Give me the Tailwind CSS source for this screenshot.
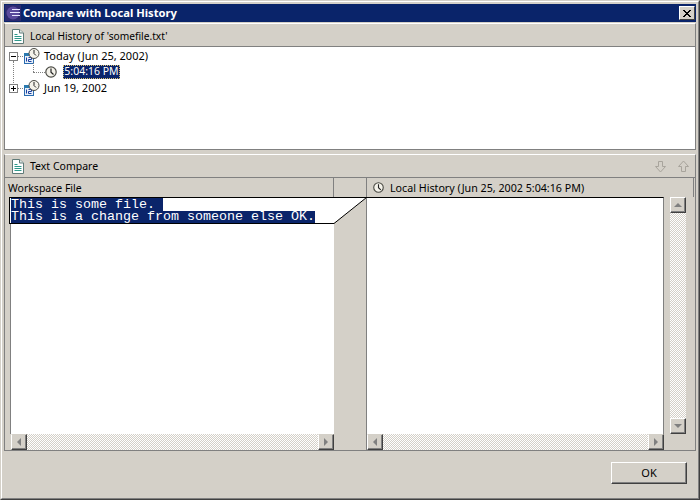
<!DOCTYPE html>
<html lang="en">
<head>
  <meta charset="UTF-8">
  <title>Compare with Local History</title>
  <script src="https://cdn.jsdelivr.net/npm/@tailwindcss/browser@4"></script>
</head>
<body class="w-[700px] h-[500px] overflow-hidden bg-[#d4d0c8] font-['Noto_Sans',sans-serif] text-[10.5px] text-black">
  <svg width="0" height="0" class="absolute">
    <defs>
      <pattern id="dots" width="2" height="2" patternUnits="userSpaceOnUse">
        <rect width="2" height="2" fill="#ffffff"/>
        <rect width="1" height="1" fill="#d4d0c8"/>
        <rect x="1" y="1" width="1" height="1" fill="#d4d0c8"/>
      </pattern>
      <symbol id="file" viewBox="0 0 12 15">
        <path d="M.5.5h7l4 3.500v10.500h-11z" fill="#fff" stroke="#5f7a78"/>
        <path d="M7.500.5v3.500h4" fill="#dfe8e6" stroke="#5f7a78"/>
        <path d="M2.500 5.500h3M2.500 7.500h7M2.500 9.500h7M2.500 11.500h7" stroke="#2f9a8c"/>
      </symbol>
      <symbol id="clock" viewBox="0 0 12 12">
        <circle cx="6" cy="6" r="5.200" fill="#f4f2ea" stroke="#4a4a44" stroke-width="1.200"/>
        <path d="M6 2.500v3.700l2.500 2.300" fill="none" stroke="#222" stroke-width="1.200"/>
      </symbol>
      <symbol id="cal" viewBox="0 0 20 18">
        <rect x="1.500" y="6.500" width="9" height="10" fill="#e8f0f8" stroke="#2a6cb0"/>
        <rect x="1" y="6" width="10" height="3" fill="#2a7ab0"/>
        <path d="M3.500 10.500v4M5.500 10.500h3v2h-3v2h3" fill="none" stroke="#1a3fa0"/>
        <circle cx="11" cy="6.500" r="5" fill="#f4f2ea" stroke="#4a4a44"/>
        <path d="M11 3v3.500l2 2" fill="none" stroke="#222"/>
      </symbol>
    </defs>
  </svg>

  <div class="h-full border border-l-[#d4d0c8] border-t-[#d4d0c8] border-r-[#404040] border-b-[#404040]">
  <div class="h-full flex flex-col border border-l-white border-t-white border-r-[#808080] border-b-[#808080] px-[2px] pt-[2px]">
    <!-- title bar -->
    <div class="h-[18px] shrink-0 flex items-center bg-[#0a246a] pl-[1px] pr-[1px]">
      <svg width="16" height="16" viewBox="0 0 16 16" class="shrink-0">
        <rect width="16" height="16" fill="#2c2a70"/>
        <circle cx="8" cy="8" r="6.500" fill="#5a4a9c"/>
        <path d="M15 4.500H7M15 7.500H5M15 10.500H7" stroke="#e8e8ff" stroke-width="1.200"/>
      </svg>
      <span class="ml-[2px] font-bold text-white text-[11.2px]">Compare with Local History</span>
      <div class="ml-auto w-[16px] h-[14px] bg-[#d4d0c8] border border-t-white border-l-white border-r-[#404040] border-b-[#404040] flex items-center justify-center">
        <svg width="8" height="7" viewBox="0 0 8 7"><path d="M0 0l7 7M1 0l7 7M7 0l-7 7M8 0l-7 7" stroke="#000"/></svg>
      </div>
    </div>

    <!-- history pane -->
    <div class="mt-[1px] h-[127px] shrink-0 flex flex-col border border-t-white border-l-[#808080] border-r-[#808080] border-b-[#808080]">
      <div class="h-[23px] shrink-0 flex items-center pt-[2px] pl-[7px] border-b border-[#808080]">
        <svg width="12" height="15" class="shrink-0"><use href="#file"/></svg>
        <span class="ml-[6px] mt-[1px] text-[10.2px]">Local History of 'somefile.txt'</span>
      </div>
      <div class="flex-1 bg-white pt-[1px] pl-[4px] relative">
        <div class="h-[16px] flex items-center">
          <div class="mt-[1px] w-[9px] h-[9px] border border-[#808080] flex items-center justify-center shrink-0"><div class="w-[5px] h-[1px] bg-black"></div></div>
          <div class="w-[5px] border-t border-dotted border-[#808080]"></div>
          <svg width="20" height="18" class="shrink-0"><use href="#cal"/></svg>
          <span class="ml-[1px] text-[11px]">Today (Jun 25, 2002)</span>
        </div>
        <div class="h-[16px] flex items-center pl-[24px]">
          <div class="w-[12px] border-t border-dotted border-[#808080]"></div>
          <svg width="12" height="12" class="shrink-0"><use href="#clock"/></svg>
          <span class="ml-[6px] w-[57px] h-[14px] flex items-center justify-center bg-[#0a246a] text-white outline-1 outline-dotted outline-[#d8c070] -outline-offset-1">5:04:16 PM</span>
        </div>
        <div class="h-[16px] flex items-center">
          <div class="mt-[1px] w-[9px] h-[9px] border border-[#808080] flex items-center justify-center shrink-0 relative">
            <div class="w-[5px] h-[1px] bg-black"></div>
            <div class="absolute w-[1px] h-[5px] bg-black"></div>
          </div>
          <div class="w-[5px] border-t border-dotted border-[#808080]"></div>
          <svg width="20" height="18" class="shrink-0"><use href="#cal"/></svg>
          <span class="ml-[1px] text-[11px]">Jun 19, 2002</span>
        </div>
        <!-- tree guide lines -->
        <div class="absolute left-[8px] top-[14px] h-[22px] border-l border-dotted border-[#808080]"></div>
        <div class="absolute left-[28px] top-[16px] h-[9px] border-l border-dotted border-[#808080]"></div>
      </div>
    </div>

    <!-- compare pane -->
    <div class="mt-[4px] h-[297px] shrink-0 flex flex-col border border-t-white border-l-[#808080] border-r-[#808080] border-b-[#808080]">
      <div class="h-[23px] shrink-0 flex items-center pl-[7px] border-b border-[#808080]">
        <svg width="12" height="15" class="shrink-0"><use href="#file"/></svg>
        <span class="ml-[6px] mt-[2px]">Text Compare</span>
        <svg width="13" height="13" viewBox="0 0 13 13" class="ml-auto shrink-0"><path d="M4.500 1.500h4v5h3l-5 5.500-5-5.500h3z" fill="none" stroke="#a8a49c"/></svg>
        <svg width="13" height="13" viewBox="0 0 13 13" class="ml-[10px] mr-[5px] shrink-0"><path d="M4.500 11.500h4v-5h3l-5-5.500-5 5.500h3z" fill="none" stroke="#a8a49c"/></svg>
      </div>

      <div class="h-[19px] shrink-0 flex">
        <div class="w-[329px] flex items-center pt-[2px] pl-[3px] border-r border-[#808080]">Workspace File</div>
        <div class="w-[33px] border-r border-[#808080]"></div>
        <div class="flex-1 flex items-center pl-[6px] border-r border-[#808080] mr-[1px]">
          <svg width="11" height="11" class="shrink-0"><use href="#clock"/></svg>
          <span class="ml-[6px] mt-[2px] text-[10.7px]">Local History (Jun 25, 2002 5:04:16 PM)</span>
        </div>
      </div>

      <div class="flex-1 flex min-h-0">
        <!-- left side -->
        <div class="w-[329px] shrink-0 flex flex-col">
          <div class="flex-1 flex min-h-0">
            <div class="w-[6px] shrink-0 border-r border-[#808080]"></div>
            <div class="flex-1 bg-white">
              <div class="h-[27px] -ml-[2px] pl-[1px] bg-white border-l border-t border-b border-black font-['Liberation_Mono',monospace] text-[13.33px]">
                <div class="h-[13px] leading-[13px] w-fit bg-[#0a246a] text-white pr-[8px]">This is some file.</div>
                <div class="h-[12px] leading-[12px] w-fit bg-[#0a246a] text-white">This is a change from someone else OK.</div>
              </div>
            </div>
          </div>
          <div class="h-[16px] shrink-0 flex pl-[6px]">
            <div class="w-[16px] border border-t-[#d4d0c8] border-l-white border-r-[#404040] border-b-[#404040] shadow-[inset_-1px_-1px_0_#808080] flex items-center justify-center"><div class="border-y-[4px] border-y-transparent border-r-[4px] border-r-[#808080]"></div></div>
            <svg class="flex-1 h-full"><rect width="100%" height="100%" fill="url(#dots)"/></svg>
            <div class="w-[16px] border border-t-[#d4d0c8] border-l-white border-r-[#404040] border-b-[#404040] shadow-[inset_-1px_-1px_0_#808080] flex items-center justify-center"><div class="border-y-[4px] border-y-transparent border-l-[4px] border-l-[#808080]"></div></div>
          </div>
        </div>

        <!-- connector -->
        <div class="w-[33px] shrink-0 relative border-r border-[#808080]">
          <svg width="33" height="28" class="absolute left-0 top-0">
            <path d="M0 1H32V1L0 26z" fill="#fff"/>
            <path d="M0 .5H33M0 26.500L32.500 .5" stroke="#000" fill="none"/>
          </svg>
        </div>

        <!-- right side -->
        <div class="flex-1 flex flex-col min-w-0">
          <div class="flex-1 flex min-h-0">
            <div class="w-[297px] shrink-0 bg-white border-t border-black border-r border-r-[#808080]"></div>
            <div class="w-[16px] ml-[6px] shrink-0 flex flex-col">
              <div class="h-[16px] shrink-0 border border-t-white border-l-white border-r-[#404040] border-b-[#404040] shadow-[inset_-1px_-1px_0_#808080] flex items-center justify-center"><div class="border-x-[4px] border-x-transparent border-b-[4px] border-b-[#808080]"></div></div>
              <svg class="flex-1 w-full min-h-0"><rect width="100%" height="100%" fill="url(#dots)"/></svg>
              <div class="h-[16px] shrink-0 border border-t-white border-l-white border-r-[#404040] border-b-[#404040] shadow-[inset_-1px_-1px_0_#808080] flex items-center justify-center"><div class="border-x-[4px] border-x-transparent border-t-[4px] border-t-[#808080]"></div></div>
            </div>
          </div>
          <div class="h-[16px] shrink-0 flex w-[297px]">
            <div class="w-[16px] border border-t-[#d4d0c8] border-l-white border-r-[#404040] border-b-[#404040] shadow-[inset_-1px_-1px_0_#808080] flex items-center justify-center"><div class="border-y-[4px] border-y-transparent border-r-[4px] border-r-[#808080]"></div></div>
            <svg class="flex-1 h-full"><rect width="100%" height="100%" fill="url(#dots)"/></svg>
            <div class="w-[16px] border border-t-[#d4d0c8] border-l-white border-r-[#404040] border-b-[#404040] shadow-[inset_-1px_-1px_0_#808080] flex items-center justify-center"><div class="border-y-[4px] border-y-transparent border-l-[4px] border-l-[#808080]"></div></div>
          </div>
        </div>
      </div>
    </div>

    <!-- buttons -->
    <div class="flex-1 flex items-start justify-end pt-[11px] pr-[9px]">
      <button class="w-[76px] h-[22px] bg-[#d4d0c8] border border-t-white border-l-white border-r-[#404040] border-b-[#404040] shadow-[inset_-1px_-1px_0_#808080] text-[11px]">OK</button>
    </div>
  </div>
  </div>
</body>
</html>
